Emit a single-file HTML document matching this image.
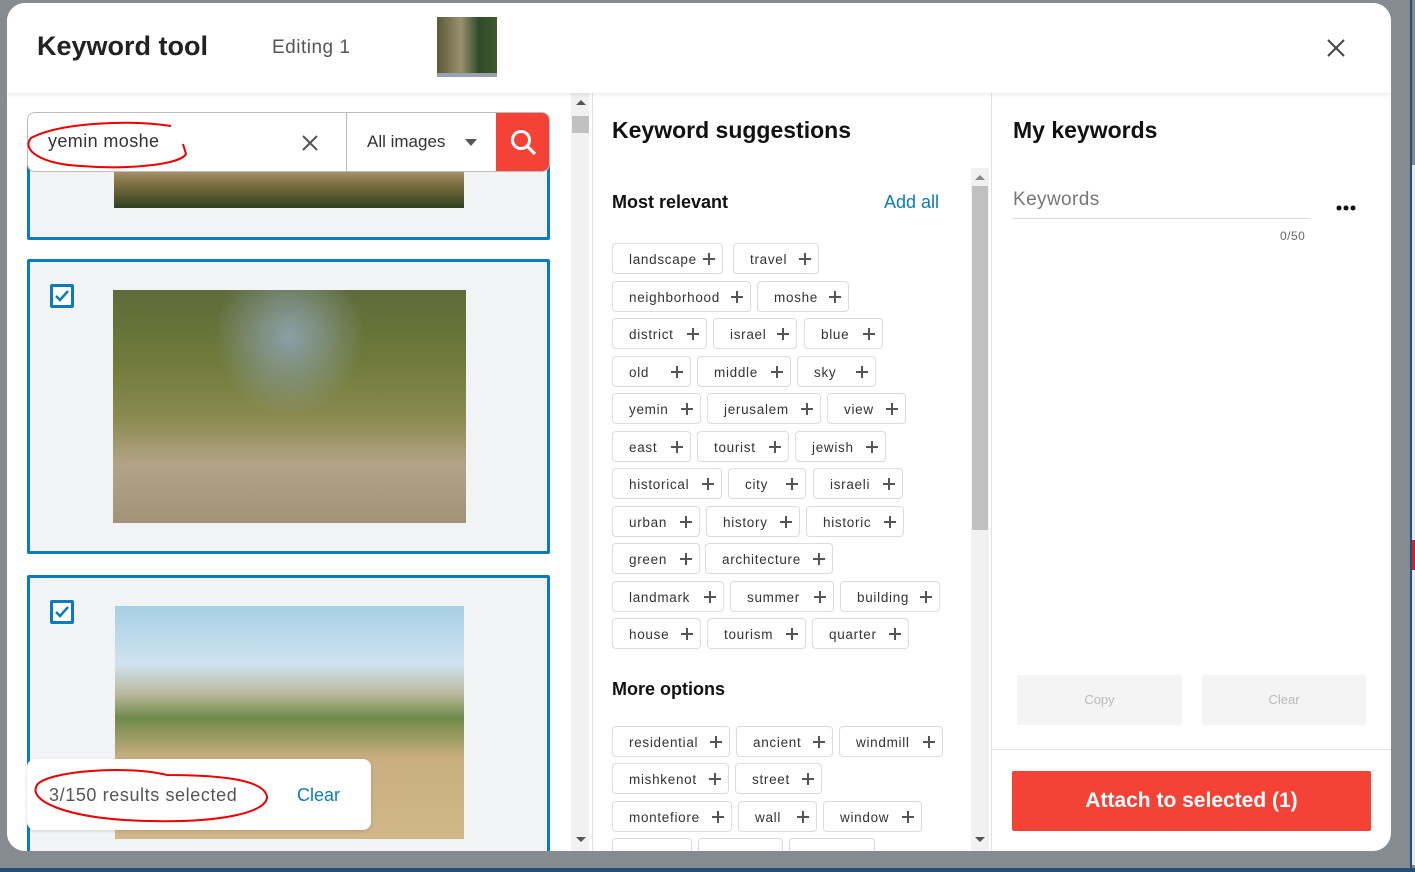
<!DOCTYPE html>
<html><head><meta charset="utf-8"><style>
*{box-sizing:border-box;margin:0;padding:0}
body{width:1415px;height:872px;background:#868a91;font-family:"Liberation Sans",sans-serif;position:relative;overflow:hidden;color:#222}
.abs{position:absolute}
.modal{position:absolute;left:7px;top:3px;width:1384px;height:848px;background:#fff;border-radius:18px;overflow:hidden}
.hdr{position:absolute;left:0;top:0;width:1384px;height:90px;background:#fff;box-shadow:0 2px 4px rgba(0,0,0,.08)}
.card{position:absolute;left:20px;width:523px;background:#f2f3f5;border:3px solid #0b7bc0;border-radius:2px}
.cb{position:absolute;width:24px;height:24px;border:3px solid #0b7bc0;background:#fff;border-radius:2px}
.tag{position:absolute;height:31px;border:1px solid #dcdcdc;border-radius:4px;font-size:13.5px;color:#333;letter-spacing:.7px;line-height:31px;padding-left:16px;background:#fff}
.tag b{position:absolute;right:7px;top:9px;width:12px;height:12px}
.tag b:before{content:"";position:absolute;left:0;top:5px;width:12px;height:2px;background:#555}
.tag b:after{content:"";position:absolute;left:5px;top:0;width:2px;height:12px;background:#555}
h2{font-size:23px;font-weight:bold;color:#111}
h3{font-size:18px;font-weight:bold;color:#111}
</style></head><body>
<div class="abs" style="left:1410px;top:0;width:2px;height:872px;background:#1f4f7a"></div>
<div class="abs" style="left:1412px;top:165px;width:3px;height:700px;background:#e8e8e8"></div>
<div class="abs" style="left:1412px;top:540px;width:3px;height:30px;background:#c23"></div>
<div class="abs" style="left:0;top:868px;width:1415px;height:4px;background:#1f4f7a"></div>
<div class="modal">
 <div class="abs" style="left:0;top:90px;width:585px;height:758px;overflow:hidden;background:#fff">
  <div class="card" style="top:30px;height:117px">
   <div class="abs" style="left:84px;top:42px;width:350px;height:40px;background:linear-gradient(180deg,#b59a7a,#7c7040 40%,#2f4020)"></div>
  </div>
  <div class="card" style="top:166px;height:295px">
   <div class="cb" style="left:20px;top:22px"><svg width="18" height="18" viewBox="0 0 18 18"><path d="M3 9l4 4 8-9" stroke="#0b7bc0" stroke-width="2.5" fill="none"/></svg></div>
   <div class="abs" style="left:83px;top:28px;width:353px;height:233px;background:radial-gradient(ellipse at 50% 20%,#8aa0a8 0,transparent 30%),linear-gradient(180deg,#5f6a3a 0%,#6f7a3a 30%,#8b8a50 55%,#b2a488 75%,#a29378 100%)"></div>
  </div>
  <div class="card" style="top:482px;height:300px">
   <div class="cb" style="left:20px;top:22px"><svg width="18" height="18" viewBox="0 0 18 18"><path d="M3 9l4 4 8-9" stroke="#0b7bc0" stroke-width="2.5" fill="none"/></svg></div>
   <div class="abs" style="left:85px;top:28px;width:349px;height:233px;background:linear-gradient(180deg,#a8cfe6 0%,#cfe3ee 25%,#b9b79a 38%,#6f8a4a 48%,#c8ae80 65%,#d2b78b 100%)"></div>
  </div>
  <div class="abs" style="left:20px;top:19px;width:523px;height:60px;background:#fff;border:1px solid #bbb;border-radius:8px;overflow:hidden">
   <div class="abs" style="left:20px;top:18px;font-size:18px;letter-spacing:.4px;color:#333">yemin moshe</div>
   <svg class="abs" style="left:272px;top:20px" width="20" height="20" viewBox="0 0 20 20"><path d="M3 3l14 14M17 3L3 17" stroke="#555" stroke-width="2"/></svg>
   <div class="abs" style="left:318px;top:0;width:1px;height:60px;background:#bbb"></div>
   <div class="abs" style="left:339px;top:19px;font-size:17px;color:#333">All images</div>
   <div class="abs" style="left:437px;top:26px;width:0;height:0;border-left:6px solid transparent;border-right:6px solid transparent;border-top:7px solid #555"></div>
   <div class="abs" style="left:468px;top:0;width:55px;height:60px;background:#f44336">
    <svg class="abs" style="left:13px;top:15px" width="30" height="30" viewBox="0 0 30 30"><circle cx="12" cy="12" r="8.5" stroke="#fff" stroke-width="3" fill="none"/><path d="M18 18l8 8" stroke="#fff" stroke-width="3.2"/></svg>
   </div>
  </div>
  <svg class="abs" style="left:14px;top:25px" width="170" height="55"><path d="M150 8 C110 2,40 4,10 20 C0 32,20 46,60 48 C110 52,160 46,165 36 L162 26" stroke="#e00" stroke-width="2" fill="none"/></svg>
  <div class="abs" style="left:20px;top:666px;width:344px;height:71px;background:#fff;border-radius:8px;box-shadow:0 1px 3px rgba(0,0,0,.15)">
   <div class="abs" style="left:22px;top:26px;font-size:18px;letter-spacing:.6px;color:#555">3/150 results selected</div>
   <div class="abs" style="left:270px;top:26px;font-size:18px;color:#0b7bc0">Clear</div>
  </div>
  <svg class="abs" style="left:20px;top:668px" width="250" height="70"><path d="M140 14 C100 4,20 10,10 24 C0 40,40 58,120 60 C200 62,240 50,240 36 C238 20,200 14,140 14" stroke="#e00" stroke-width="2" fill="none"/></svg>
 </div>
 <div class="abs" style="left:564px;top:90px;width:18px;height:758px;background:#f1f1f1"></div>
 <div class="abs" style="left:565px;top:113px;width:17px;height:17px;background:#c1c1c1"></div>
 <div class="abs" style="left:569px;top:97px;border-left:5px solid transparent;border-right:5px solid transparent;border-bottom:5px solid #555"></div>
 <div class="abs" style="left:569px;top:834px;border-left:5px solid transparent;border-right:5px solid transparent;border-top:5px solid #555"></div>
 <div class="abs" style="left:585px;top:90px;width:1px;height:758px;background:#e2e2e2"></div>
 <div class="abs" style="left:984px;top:90px;width:1px;height:758px;background:#e2e2e2"></div>
 <div class="hdr">
  <div class="abs" style="left:30px;top:28px;font-size:27px;font-weight:bold;color:#222">Keyword tool</div>
  <div class="abs" style="left:265px;top:34px;font-size:19px;letter-spacing:.5px;color:#555">Editing 1</div>
  <div class="abs" style="left:430px;top:14px;width:60px;height:60px;background:linear-gradient(90deg,#5a5a3a,#9a9070 40%,#2f4a2a 70%,#3f5a30);border-bottom:4px solid #9aa0b0"></div>
  <svg class="abs" style="left:1319px;top:35px" width="20" height="20" viewBox="0 0 20 20"><path d="M2 2l16 16M18 2L2 18" stroke="#444" stroke-width="2"/></svg>
 </div>
 <div class="abs" style="left:605px;top:114px"><h2>Keyword suggestions</h2></div>
 <div class="abs" style="left:964px;top:165px;width:18px;height:683px;background:#f1f1f1"></div>
 <div class="abs" style="left:965px;top:183px;width:16px;height:344px;background:#c1c1c1"></div>
 <div class="abs" style="left:968px;top:172px;border-left:5px solid transparent;border-right:5px solid transparent;border-bottom:5px solid #888"></div>
 <div class="abs" style="left:968px;top:834px;border-left:5px solid transparent;border-right:5px solid transparent;border-top:5px solid #555"></div>
 <div class="abs" style="left:605px;top:189px"><h3>Most relevant</h3></div>
 <div class="abs" style="left:877px;top:189px;font-size:18px;color:#0b7bc0">Add all</div>
 <div class="abs" style="left:605px;top:676px"><h3>More options</h3></div>
 <div class="abs" style="left:586px;top:0;width:378px;height:848px;overflow:hidden">
 <div class="tag" style="left:19px;top:240px;width:111px">landscape<b></b></div>
 <div class="tag" style="left:140px;top:240px;width:86px">travel<b></b></div>
 <div class="tag" style="left:19px;top:278px;width:139px">neighborhood<b></b></div>
 <div class="tag" style="left:164px;top:278px;width:92px">moshe<b></b></div>
 <div class="tag" style="left:19px;top:315px;width:95px">district<b></b></div>
 <div class="tag" style="left:120px;top:315px;width:84px">israel<b></b></div>
 <div class="tag" style="left:211px;top:315px;width:79px">blue<b></b></div>
 <div class="tag" style="left:19px;top:353px;width:79px">old<b></b></div>
 <div class="tag" style="left:104px;top:353px;width:94px">middle<b></b></div>
 <div class="tag" style="left:204px;top:353px;width:79px">sky<b></b></div>
 <div class="tag" style="left:19px;top:390px;width:89px">yemin<b></b></div>
 <div class="tag" style="left:114px;top:390px;width:114px">jerusalem<b></b></div>
 <div class="tag" style="left:234px;top:390px;width:79px">view<b></b></div>
 <div class="tag" style="left:19px;top:428px;width:79px">east<b></b></div>
 <div class="tag" style="left:104px;top:428px;width:92px">tourist<b></b></div>
 <div class="tag" style="left:202px;top:428px;width:91px">jewish<b></b></div>
 <div class="tag" style="left:19px;top:465px;width:110px">historical<b></b></div>
 <div class="tag" style="left:135px;top:465px;width:78px">city<b></b></div>
 <div class="tag" style="left:220px;top:465px;width:90px">israeli<b></b></div>
 <div class="tag" style="left:19px;top:503px;width:88px">urban<b></b></div>
 <div class="tag" style="left:113px;top:503px;width:94px">history<b></b></div>
 <div class="tag" style="left:213px;top:503px;width:98px">historic<b></b></div>
 <div class="tag" style="left:19px;top:540px;width:88px">green<b></b></div>
 <div class="tag" style="left:112px;top:540px;width:128px">architecture<b></b></div>
 <div class="tag" style="left:19px;top:578px;width:112px">landmark<b></b></div>
 <div class="tag" style="left:137px;top:578px;width:104px">summer<b></b></div>
 <div class="tag" style="left:247px;top:578px;width:100px">building<b></b></div>
 <div class="tag" style="left:19px;top:615px;width:89px">house<b></b></div>
 <div class="tag" style="left:114px;top:615px;width:99px">tourism<b></b></div>
 <div class="tag" style="left:219px;top:615px;width:97px">quarter<b></b></div>
 <div class="tag" style="left:19px;top:723px;width:118px">residential<b></b></div>
 <div class="tag" style="left:143px;top:723px;width:97px">ancient<b></b></div>
 <div class="tag" style="left:246px;top:723px;width:104px">windmill<b></b></div>
 <div class="tag" style="left:19px;top:760px;width:117px">mishkenot<b></b></div>
 <div class="tag" style="left:142px;top:760px;width:87px">street<b></b></div>
 <div class="tag" style="left:19px;top:798px;width:120px">montefiore<b></b></div>
 <div class="tag" style="left:145px;top:798px;width:79px">wall<b></b></div>
 <div class="tag" style="left:230px;top:798px;width:99px">window<b></b></div>
 <div class="tag" style="left:19px;top:835px;width:80px">&nbsp;</div>
 <div class="tag" style="left:105px;top:835px;width:85px">&nbsp;</div>
 <div class="tag" style="left:196px;top:835px;width:86px">&nbsp;</div>
 </div>
 <div class="abs" style="left:1006px;top:114px"><h2>My keywords</h2></div>
 <div class="abs" style="left:1006px;top:186px;font-size:19px;letter-spacing:.4px;color:#777">Keywords</div>
 <div class="abs" style="left:1006px;top:215px;width:298px;height:1px;background:#ddd"></div>
 <div class="abs" style="left:1273px;top:226px;font-size:12px;color:#666;letter-spacing:.5px">0/50</div>
 <svg class="abs" style="left:1328px;top:200px" width="24" height="10"><circle cx="4" cy="5" r="2.5" fill="#111"/><circle cx="11" cy="5" r="2.5" fill="#111"/><circle cx="18" cy="5" r="2.5" fill="#111"/></svg>
 <div class="abs" style="left:1010px;top:672px;width:165px;height:50px;background:#f4f4f4;border-radius:2px;text-align:center;line-height:50px;font-size:13px;color:#bbb">Copy</div>
 <div class="abs" style="left:1195px;top:672px;width:164px;height:50px;background:#f4f4f4;border-radius:2px;text-align:center;line-height:50px;font-size:13px;color:#bbb">Clear</div>
 <div class="abs" style="left:985px;top:746px;width:399px;height:1px;background:#e2e2e2"></div>
 <div class="abs" style="left:1005px;top:768px;width:359px;height:60px;background:#f44336;border-radius:2px;text-align:center;line-height:60px;font-size:21px;font-weight:bold;color:#fff">Attach to selected (1)</div>
</div>
</body></html>
